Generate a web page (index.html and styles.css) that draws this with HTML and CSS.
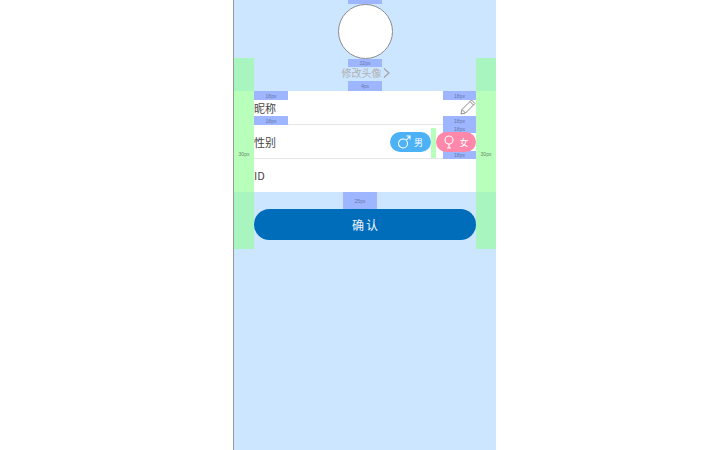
FILE: index.html
```
<!DOCTYPE html>
<html lang="zh">
<head>
<meta charset="utf-8">
<title>资料</title>
<link rel="stylesheet" href="styles.css">
</head>
<body>
<main class="phone">
  <div class="avatar"></div>
  <div class="change">修改头像<svg class="chev" width="7" height="10" viewBox="0 0 7 10"><path d="M1 .5 6 5 1 9.500" fill="none" stroke="#a3a3a3" stroke-width="1.200"/></svg></div>
  <section class="card">
    <div class="row">
      <span>昵称</span>
      <svg class="pen" width="16" height="16" viewBox="0 0 16 16"><path d="M1 15 2 10.500 11.500 1 15 4.500 5.500 14ZM2 10.500 5.500 14M10 2.500 13.500 6" fill="none" stroke="#8a8a8a" stroke-width="1"/></svg>
    </div>
    <div class="row">
      <span>性别</span>
      <div class="genders">
        <div class="pill male">
          <svg width="14" height="14" viewBox="0 0 14 14"><circle cx="6" cy="8.500" r="4.500" fill="none" stroke="#fff" stroke-width="1.100"/><path d="M9.500 5 13 1M9.500 1H13V4.500" fill="none" stroke="#fff" stroke-width="1.100"/></svg>
          <span>男</span>
        </div>
        <div class="pill female">
          <svg width="12" height="14" viewBox="0 0 12 14"><circle cx="6" cy="5" r="4" fill="none" stroke="#fff" stroke-width="1.100"/><path d="M6 9V13M4 13H8" fill="none" stroke="#fff" stroke-width="1.100"/></svg>
          <span>女</span>
        </div>
      </div>
    </div>
    <div class="row">
      <span>ID</span>
    </div>
  </section>
  <button class="confirm">确认</button>

  <i class="side side-l"></i><i class="side side-r"></i>
  <i class="side side-lw"></i><i class="side side-rw"></i>
  <b class="tag t-top"></b>
  <b class="tag t-a">32px</b>
  <b class="tag t-b">4px</b>
  <b class="tag t-c">18px</b>
  <b class="tag t-d">18px</b>
  <b class="tag t-e">18px</b>
  <b class="tag t-f">18px</b>
  <b class="tag t-g">18px</b>
  <b class="tag t-h">18px</b>
  <b class="tag t-i">25px</b>
  <i class="gap"></i>
  <b class="lbl l-l">30px</b>
  <b class="lbl l-r">30px</b>
</main>
</body>
</html>
```
FILE: styles.css
```
* { box-sizing: border-box; }
html, body { margin: 0; height: 100%; background: #fff; }
body { overflow: hidden; font-family: "Noto Sans CJK SC", "Liberation Sans", sans-serif; }
.phone {
  position: relative;
  margin-left: 233px;
  width: 263px;
  height: 450px;
  border-left: 1px solid #999;
  background: #cce6ff;
  padding: 4px 20px 0 20px;
  display: flex;
  flex-direction: column;
  align-items: stretch;
}
.avatar {
  align-self: center;
  width: 55px;
  height: 55px;
  border-radius: 50%;
  background: #fff;
  border: 1px solid #8c8c8c;
}
.change {
  margin-top: 7px;
  height: 14px;
  display: flex;
  align-items: center;
  justify-content: center;
  gap: 1px;
  font-size: 10px;
  line-height: 14px;
  color: #b0b0b0;
  padding-left: 1px;
}
.card { margin-top: 11px; background: #fff; display: flex; flex-direction: column; }
.row {
  height: 34px;
  padding-top: 2px;
  display: flex;
  align-items: center;
  justify-content: space-between;
  border-bottom: 1px solid #e6e6e6;
  font-size: 11px;
  color: #444;
}
.row:first-child { height: 33.500px; }
.row:last-child { border-bottom: 0; height: 33.500px; padding-top: 0; }
.pen { margin-bottom: 3px; }
.genders { display: flex; gap: 5px; position: relative; z-index: 2; }
.pill {
  width: 41px;
  height: 20px;
  border-radius: 10px;
  display: flex;
  align-items: center;
  justify-content: center;
  gap: 3px;
  color: #fff;
  font-size: 9px;
}
.male { background: #4cb2f5; padding-right: 1px; }
.female { width: 40px; background: #ff87a9; }
.female svg { margin-right: 1px; }
.confirm {
  margin-top: 17px;
  height: 31px;
  border: 0;
  border-radius: 16px;
  background: #006dbb;
  color: #f0f6fb;
  font: 12px "Noto Sans CJK SC", sans-serif;
  letter-spacing: 2px;
  padding: 0 0 0 2px;
}
.side { position: absolute; width: 20px; background: #a8f5bf; top: 58px; height: 191px; }
.side-l { left: 0; }
.side-r { left: 242px; }
.side-lw, .side-rw { top: 91px; height: 101px; background: #b9ffbc; }
.side-lw { left: 0; }
.side-rw { left: 242px; }
.tag {
  position: absolute;
  width: 34px;
  display: flex;
  align-items: center;
  justify-content: center;
  background: #9db6ff;
  color: #6677aa;
  font-size: 5px;
  font-weight: 400;
  font-family: "Liberation Sans", sans-serif;
}
.t-top { left: 114px; top: 0; height: 4px; }
.t-a { left: 114px; top: 59px; height: 8px; }
.t-b { left: 114px; top: 81px; height: 10px; }
.t-c { left: 20px; top: 91px; height: 9px; }
.t-d { left: 20px; top: 116px; height: 9px; }
.t-e { left: 209px; top: 91px; height: 9px; width: 33px; }
.t-f { left: 209px; top: 116px; height: 9px; width: 33px; }
.t-g { left: 209px; top: 125px; height: 8px; width: 33px; }
.t-h { left: 209px; top: 151px; height: 8px; width: 33px; }
.t-i { left: 109px; top: 192px; height: 17px; }
.gap { position: absolute; left: 197px; top: 128px; width: 5px; height: 30px; background: #b9ffbc; }
.lbl { position: absolute; top: 151px; width: 20px; text-align: center; font: 5px "Liberation Sans", sans-serif; color: #668866; }
.l-l { left: 0; }
.l-r { left: 242px; }
```
